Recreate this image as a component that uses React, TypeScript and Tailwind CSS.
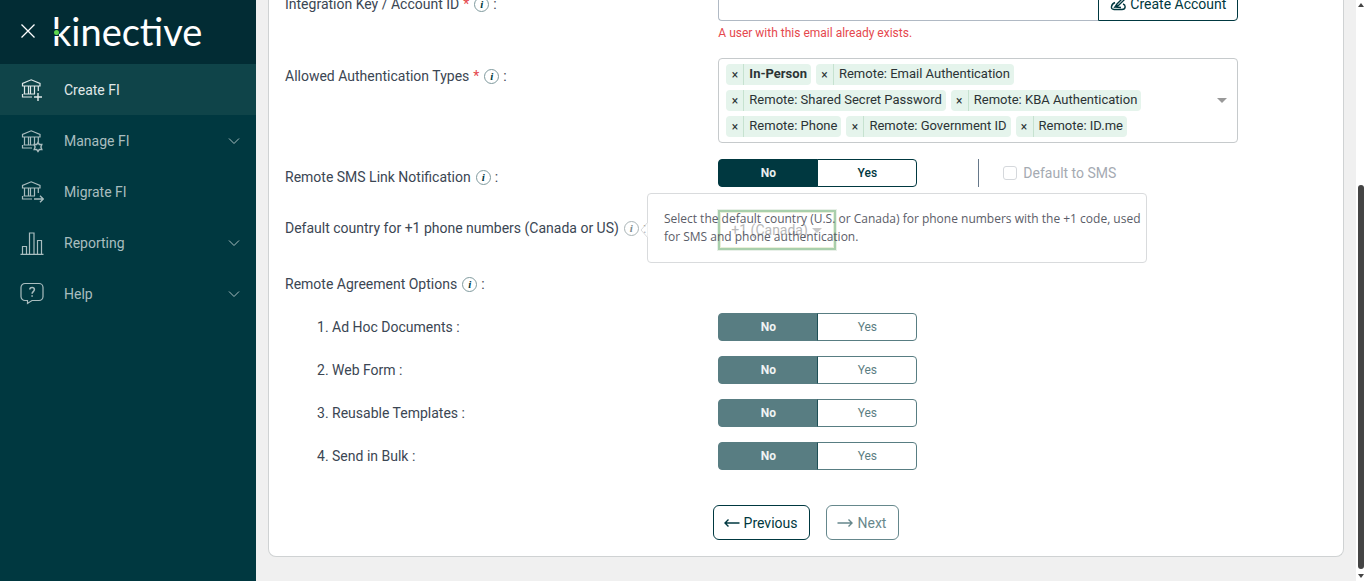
import React, { useState } from 'react';
import { clsx } from 'clsx';

type NavIcon = 'create' | 'manage' | 'migrate' | 'reporting' | 'help';

interface NavItem {
  label: string;
  icon: NavIcon;
  active?: boolean;
  expandable?: boolean;
}

const navItems: NavItem[] = [
  { label: 'Create FI', icon: 'create', active: true },
  { label: 'Manage FI', icon: 'manage', expandable: true },
  { label: 'Migrate FI', icon: 'migrate' },
  { label: 'Reporting', icon: 'reporting', expandable: true },
  { label: 'Help', icon: 'help', expandable: true }
];

const initialTypes = [
  'In-Person',
  'Remote: Email Authentication',
  'Remote: Shared Secret Password',
  'Remote: KBA Authentication',
  'Remote: Phone',
  'Remote: Government ID',
  'Remote: ID.me'
];

const agreementOptions = ['Ad Hoc Documents', 'Web Form', 'Reusable Templates', 'Send in Bulk'];

function BankShape() {
  return <path d="M2.500 8V5.500L11.200 1.800 20 5.500V8zM4.500 8v8M8.500 8v8M10.500 8v8M14.500 8v8M18.300 8v5M3.500 16H15M2.500 16v3H12" />;
}

function SidebarIcon({ name }: { name: NavIcon }) {
  return (
    <svg className="h-6 w-6" viewBox="0 0 24 24" fill="none" stroke="currentColor" strokeWidth={1.2}>
      {name === 'create' && (
        <>
          <BankShape />
          <path d="M14 19h8M18 15v8" strokeWidth={1.400} />
        </>
      )}
      {name === 'manage' && (
        <>
          <BankShape />
          <path
            d="M18 13.500l1.300 2 2.500-.1-.9 2.600.9 2.600-2.500-.1-1.300 2-1.300-2-2.500.1.9-2.600-.9-2.600 2.500.1z"
            fill="#003840"
            strokeWidth={1.400}
          />
        </>
      )}
      {name === 'migrate' && (
        <>
          <BankShape />
          <path d="M14 19h9M20 15.700l3.300 3.300-3.300 3.300" strokeWidth={1.400} />
        </>
      )}
      {name === 'reporting' && (
        <path d="M.5 23.300h23M2.500 23v-7.500h4V23M9.500 23V2h4.500v21M17.500 23V9.500h4V23" />
      )}
      {name === 'help' && (
        <>
          <path d="M5 1.500h14a4 4 0 0 1 4 4v9a4 4 0 0 1-4 4h-7l-4.500 3v-3H5a4 4 0 0 1-4-4v-9a4 4 0 0 1 4-4z" />
          <path d="M9.800 7.600c0-3 4.600-2.900 4.600 0 0 2-2.300 2.100-2.300 4.200M12.100 13.200v1.600" strokeWidth={1.500} />
        </>
      )}
    </svg>
  );
}

function Sidebar() {
  return (
    <aside className="flex w-64 shrink-0 flex-col bg-[#003840]">
      <div className="flex h-16 items-center bg-[#022c34] pb-0.5 pl-5">
        <button type="button" aria-label="Close menu" className="text-white">
          <svg className="h-4 w-4" viewBox="0 0 16 16" fill="none" stroke="currentColor" strokeWidth={1.3}>
            <path d="M1.500 1.500l13 13M14.500 1.500l-13 13" />
          </svg>
        </button>
        <a href="#" className="relative ml-4 font-['Lato',sans-serif] text-[38px] leading-10 text-white">
          kinective
          <span className="absolute left-px top-[18px] flex h-[7px] w-1.5 items-center justify-center bg-[#022c34]">
            <span className="h-[5px] w-[5px] rounded-full bg-[#5fd84f]" />
          </span>
        </a>
      </div>
      <nav>
        {navItems.map((item) => (
          <a
            key={item.label}
            href="#"
            className={clsx(
              'flex h-[51px] items-center pl-5 pr-4 text-sm',
              item.active ? 'bg-[#0f4449] text-[#e0e8e8]' : 'text-[#a9bdbf]'
            )}
          >
            <SidebarIcon name={item.icon} />
            <span className="ml-5 flex-1">{item.label}</span>
            {item.expandable && (
              <svg className="h-3 w-3" viewBox="0 0 12 12" fill="none" stroke="currentColor">
                <path d="M1 3.500l5 5 5-5" />
              </svg>
            )}
          </a>
        ))}
      </nav>
    </aside>
  );
}

function InfoButton({ muted }: { muted?: boolean }) {
  return (
    <button
      type="button"
      aria-label="More information"
      className={clsx(
        "ml-[5px] flex h-[15px] w-[15px] items-center justify-center rounded-full border font-['Liberation_Serif',serif] text-[11px] font-bold italic leading-3",
        muted ? 'border-[#a9b4b6] text-[#7b8a8e]' : 'border-[#7f9a9e] text-[#003840]'
      )}
    >
      i
    </button>
  );
}

interface FieldRowProps {
  label: string;
  required?: boolean;
  className?: string;
  tooltip?: string;
  children?: React.ReactNode;
}

function FieldRow({ label, required, className, tooltip, children }: FieldRowProps) {
  return (
    <div className={clsx('flex items-start pr-0.5', className)}>
      <div className="flex h-9 w-5/12 shrink-0 items-center whitespace-nowrap">
        <span>{label}</span>
        {required && <span className="ml-1 text-[#e5484d]">*</span>}
        <span className="relative">
          <InfoButton muted={!!tooltip} />
          {tooltip && <Tooltip text={tooltip} />}
        </span>
        <span className="ml-1">:</span>
      </div>
      {children}
    </div>
  );
}

function Tooltip({ text }: { text: string }) {
  return (
    <div
      role="tooltip"
      className="absolute -top-7 left-7 z-10 w-[500px] whitespace-normal rounded border border-[#d9dbdd] py-4 pl-4 font-['Open_Sans',sans-serif] text-xs leading-[18px] text-[#5b5d68]"
    >
      <svg className="absolute -left-2 top-7 h-4 w-2" viewBox="0 0 8 16">
        <path d="M8 0L1 8l7 8" fill="white" fillOpacity={0.6} stroke="#d9dbdd" />
      </svg>
      {text}
    </div>
  );
}

function YesNoToggle({ label, disabled }: { label: string; disabled?: boolean }) {
  const [value, setValue] = useState('No');

  return (
    <div role="group" aria-label={label} className="flex h-7 text-xs">
      {['No', 'Yes'].map((option) => (
        <button
          key={option}
          type="button"
          disabled={disabled}
          aria-pressed={value === option}
          onClick={() => setValue(option)}
          className={clsx(
            'w-[100px] border border-[#003840] first:rounded-l last:-ml-px last:rounded-r disabled:opacity-65',
            value === option
              ? 'bg-[#003840] font-bold text-[#e8eeee]'
              : 'bg-white font-medium text-[#003840] disabled:font-normal'
          )}
        >
          {option}
        </button>
      ))}
    </div>
  );
}

function AuthTypesSelect() {
  const [selected, setSelected] = useState(initialTypes);

  return (
    <div className="flex w-1/2 items-center rounded border border-[#c6cacc] py-[5px] pl-[7px] pr-2.5">
      <ul className="flex flex-1 flex-wrap gap-[5px] pr-10">
        {selected.map((type, index) => (
          <li key={type} className="flex h-[21px] rounded-sm bg-[#e5f4ec] text-[13px] text-[#2b3335]">
            <button
              type="button"
              aria-label={`Remove ${type}`}
              onClick={() => setSelected((prev) => prev.filter((t) => t !== type))}
              className="w-[18px] border-r border-[#c6e2d0] text-xs leading-5"
            >
              ×
            </button>
            <span className={clsx('pl-[5px] pr-1 leading-5', index === 0 && 'font-bold')}>{type}</span>
          </li>
        ))}
      </ul>
      <button type="button" aria-label="Show options">
        <svg className="h-[5px] w-2.5" viewBox="0 0 10 5">
          <path d="M0 0h10L5 5z" fill="#999" />
        </svg>
      </button>
    </div>
  );
}

function ArrowIcon({ flipped }: { flipped?: boolean }) {
  return (
    <svg className={clsx('h-3.5 w-4', flipped && 'rotate-180')} viewBox="0 0 16 14" fill="none" stroke="currentColor" strokeWidth={1.400}>
      <path d="M1 7h14.500M4.500 3.500L1 7l3.500 3.500" />
    </svg>
  );
}

function Scrollbar() {
  return (
    <div className="flex w-2.5 shrink-0 flex-col items-center bg-white py-[3px]" aria-hidden="true">
      <svg className="h-1 w-1.5" viewBox="0 0 6 4"><path d="M0 4h6L3 0z" fill="#444" /></svg>
      <div className="my-[5px] flex w-1.5 flex-1 flex-col justify-end">
        <div className="h-[69%] rounded-full bg-[#444]" />
      </div>
      <svg className="h-1 w-1.5" viewBox="0 0 6 4"><path d="M0 0h6L3 4z" fill="#444" /></svg>
    </div>
  );
}

export default function App() {
  return (
    <div className="flex h-screen overflow-hidden bg-[#f0f0f0] font-['Roboto',sans-serif] text-sm text-[#3b4653]">
      <Sidebar />

      {/* Form is anchored to its end, earlier fields run off the top */}
      <main className="flex min-w-0 flex-1 flex-col justify-end px-3 pb-6">
        <form className="rounded-b-lg border border-t-0 border-[#cfd2d3] bg-white px-4 pb-4" onSubmit={(e) => e.preventDefault()}>
          <FieldRow label="Integration Key / Account ID" required className="mb-[15px]">
            <div className="w-1/2">
              <div className="flex h-[35px]">
                <input
                  type="text"
                  aria-label="Integration Key / Account ID"
                  className="min-w-0 flex-1 rounded-l border border-r-0 border-[#b0b9c4] px-2"
                />
                <button type="button" className="flex w-[140px] items-center justify-center gap-1 rounded-r border border-[#003840] text-[#003840]">
                  <svg className="h-4 w-4" viewBox="0 0 16 16" fill="none" stroke="currentColor" strokeWidth={1.400}>
                    <path d="M5 6.500C1 8 0 13.500 4 13.500h8c4 0 4-4.500 1-5.500M5 11l2-3 6-6 1.500 1.500-6 6zM5 11l6 .5" />
                  </svg>
                  Create Account
                </button>
              </div>
              <p className="mt-0.5 text-xs leading-5 text-[#e5484d]">A user with this email already exists.</p>
            </div>
          </FieldRow>

          <FieldRow label="Allowed Authentication Types" required className="mb-4">
            <AuthTypesSelect />
          </FieldRow>

          <FieldRow label="Remote SMS Link Notification" className="mb-[15px]">
            <YesNoToggle label="Remote SMS Link Notification" />
            <label className="ml-[61px] flex h-7 items-center gap-1.5 border-l border-[#66788a] pl-6 text-[#a5aab2]">
              <input type="checkbox" disabled className="h-3.5 w-3.5 appearance-none rounded-[3px] border border-[#d5d8dc]" />
              Default to SMS
            </label>
          </FieldRow>

          <FieldRow
            label="Default country for +1 phone numbers (Canada or US)"
            tooltip="Select the default country (U.S. or Canada) for phone numbers with the +1 code, used for SMS and phone authentication."
            className="mb-5"
          >
            <div className="relative h-10 w-[118px] border-2 border-[#a9cfac] shadow-[0_0_0_1px_#e8f0e8]">
              <select
                disabled
                aria-label="Default country"
                className="h-full w-full appearance-none border border-[#e9efd9] pl-2.5 text-[#b9b9b9] opacity-100"
              >
                <option>+1 (Canada)</option>
                <option>+1 (US)</option>
              </select>
              <svg className="absolute right-3 top-4 h-[5px] w-2.5" viewBox="0 0 10 5">
                <path d="M0 0h10L5 5z" fill="#c8c8c8" />
              </svg>
            </div>
          </FieldRow>

          <fieldset>
            <legend className="mb-[15px] flex h-7 items-center">
              Remote Agreement Options
              <InfoButton />
              <span className="ml-1">:</span>
            </legend>
            <ol className="flex flex-col gap-[15px]">
              {agreementOptions.map((option, index) => (
                <li key={option} className="flex items-center pr-0.5">
                  <span className="w-5/12 pl-8">
                    {index + 1}. {option} :
                  </span>
                  <YesNoToggle label={option} disabled />
                </li>
              ))}
            </ol>
          </fieldset>

          <div className="mt-[35px] flex justify-center gap-4">
            <button type="button" className="flex h-[35px] items-center gap-1 rounded-md border border-[#003840] pl-2.5 pr-3 text-[#003840]">
              <ArrowIcon />
              Previous
            </button>
            <button type="button" disabled className="flex h-[35px] items-center gap-1 rounded-md border border-[#003840] pl-2.5 pr-3 text-[#003840] opacity-60">
              <ArrowIcon flipped />
              Next
            </button>
          </div>
        </form>
      </main>

      <Scrollbar />
    </div>
  );
}
